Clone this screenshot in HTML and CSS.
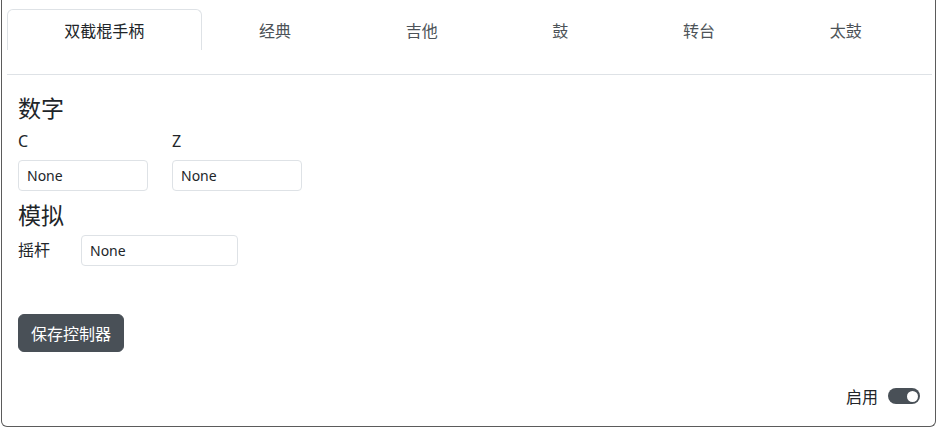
FILE: index.html
```html
<!DOCTYPE html>
<html lang="zh">
<head>
<meta charset="utf-8">
<title>控制器</title>
<link rel="stylesheet" href="styles.css">
</head>
<body>
<div class="card">
  <div class="nav">
    <div class="tabs">
      <div class="tab active">双截棍手柄</div>
      <div class="tab">经典</div>
      <div class="tab">吉他</div>
      <div class="tab">鼓</div>
      <div class="tab">转台</div>
      <div class="tab">太鼓</div>
    </div>
  </div>
  <div class="content">
    <h4 class="section-title first">数字</h4>
    <div class="field-grid">
      <div class="field">
        <label class="field-label">C</label>
        <input class="field-input narrow" type="text" value="None" readonly>
      </div>
      <div class="field">
        <label class="field-label">Z</label>
        <input class="field-input narrow" type="text" value="None" readonly>
      </div>
    </div>
    <h4 class="section-title">模拟</h4>
    <div class="inline-field">
      <label class="inline-label">摇杆</label>
      <input class="field-input wide" type="text" value="None" readonly>
    </div>
    <button class="save-btn" type="button">保存控制器</button>
  </div>
  <div class="footer">
    <span class="footer-label">启用</span>
    <span class="switch"><span class="knob"></span></span>
  </div>
</div>
</body>
</html>
```
FILE: styles.css
```css
* { box-sizing: border-box; }

html, body {
  margin: 0;
  padding: 0;
  background: #ffffff;
}

body {
  font-family: "Noto Sans", "Noto Sans CJK SC", sans-serif;
  font-size: 16px;
  line-height: 24px;
  color: #212529;
}

.card {
  margin: 0 1px 1px 1px;
  height: 427px;
  border: 1px solid #5b5b5b;
  border-top: 0;
  border-radius: 0 0 6px 6px;
  padding: 9px 3px 0 5px;
}

.nav {
  border-bottom: 1px solid #dee2e6;
  padding-bottom: 24px;
}

.tabs {
  display: flex;
  width: 912px;
}

.tab {
  flex: 1 1 auto;
  text-align: center;
  padding: 8px 16px;
  border: 1px solid transparent;
  border-bottom: 0;
  border-radius: 6px 6px 0 0;
  color: #4d5358;
  font-family: "Noto Sans CJK SC", sans-serif;
  line-height: 24px;
}

.tab.active {
  border-color: #dee2e6;
  color: #212529;
}

.content {
  margin-left: 11px;
}

.section-title {
  margin: 9px 0 7px 0;
  font-family: "Noto Sans CJK SC", sans-serif;
  font-size: 23px;
  line-height: 28px;
  font-weight: 400;
  color: #212529;
}

.section-title.first {
  margin-top: 18px;
  margin-bottom: 8px;
}

.field-grid {
  display: flex;
  gap: 24px;
}

.field {
  display: flex;
  flex-direction: column;
  width: 130px;
}

.field-label {
  line-height: 24px;
  margin-bottom: 7px;
}

.field-input {
  display: block;
  height: 31px;
  border: 1px solid #dee2e6;
  border-radius: 4px;
  padding: 4px 8px;
  font-family: "Noto Sans", sans-serif;
  font-size: 14px;
  line-height: 21px;
  color: #212529;
  background: #ffffff;
  outline: none;
}

.field-input.narrow { width: 130px; }
.field-input.wide { width: 157px; }

.inline-field {
  display: flex;
  align-items: flex-start;
}

.inline-label {
  width: 63px;
  padding-top: 2px;
  font-family: "Noto Sans CJK SC", sans-serif;
  line-height: 24px;
}

.save-btn {
  display: block;
  margin-top: 48px;
  height: 38px;
  padding: 6px 12px;
  border: 1px solid #495057;
  border-radius: 6px;
  background: #495057;
  color: #ffffff;
  font-family: "Noto Sans CJK SC", sans-serif;
  font-size: 16px;
  line-height: 24px;
}

.footer {
  margin-top: 32px;
  margin-right: 12px;
  display: flex;
  justify-content: flex-end;
  align-items: center;
  gap: 10px;
  height: 24px;
}

.footer-label {
  font-family: "Noto Sans CJK SC", sans-serif;
  line-height: 24px;
}

.switch {
  display: flex;
  justify-content: flex-end;
  align-items: center;
  width: 32px;
  height: 16px;
  padding: 0 2px;
  border-radius: 8px;
  background: #495057;
}

.knob {
  width: 11px;
  height: 11px;
  border-radius: 50%;
  background: #ffffff;
}
```
